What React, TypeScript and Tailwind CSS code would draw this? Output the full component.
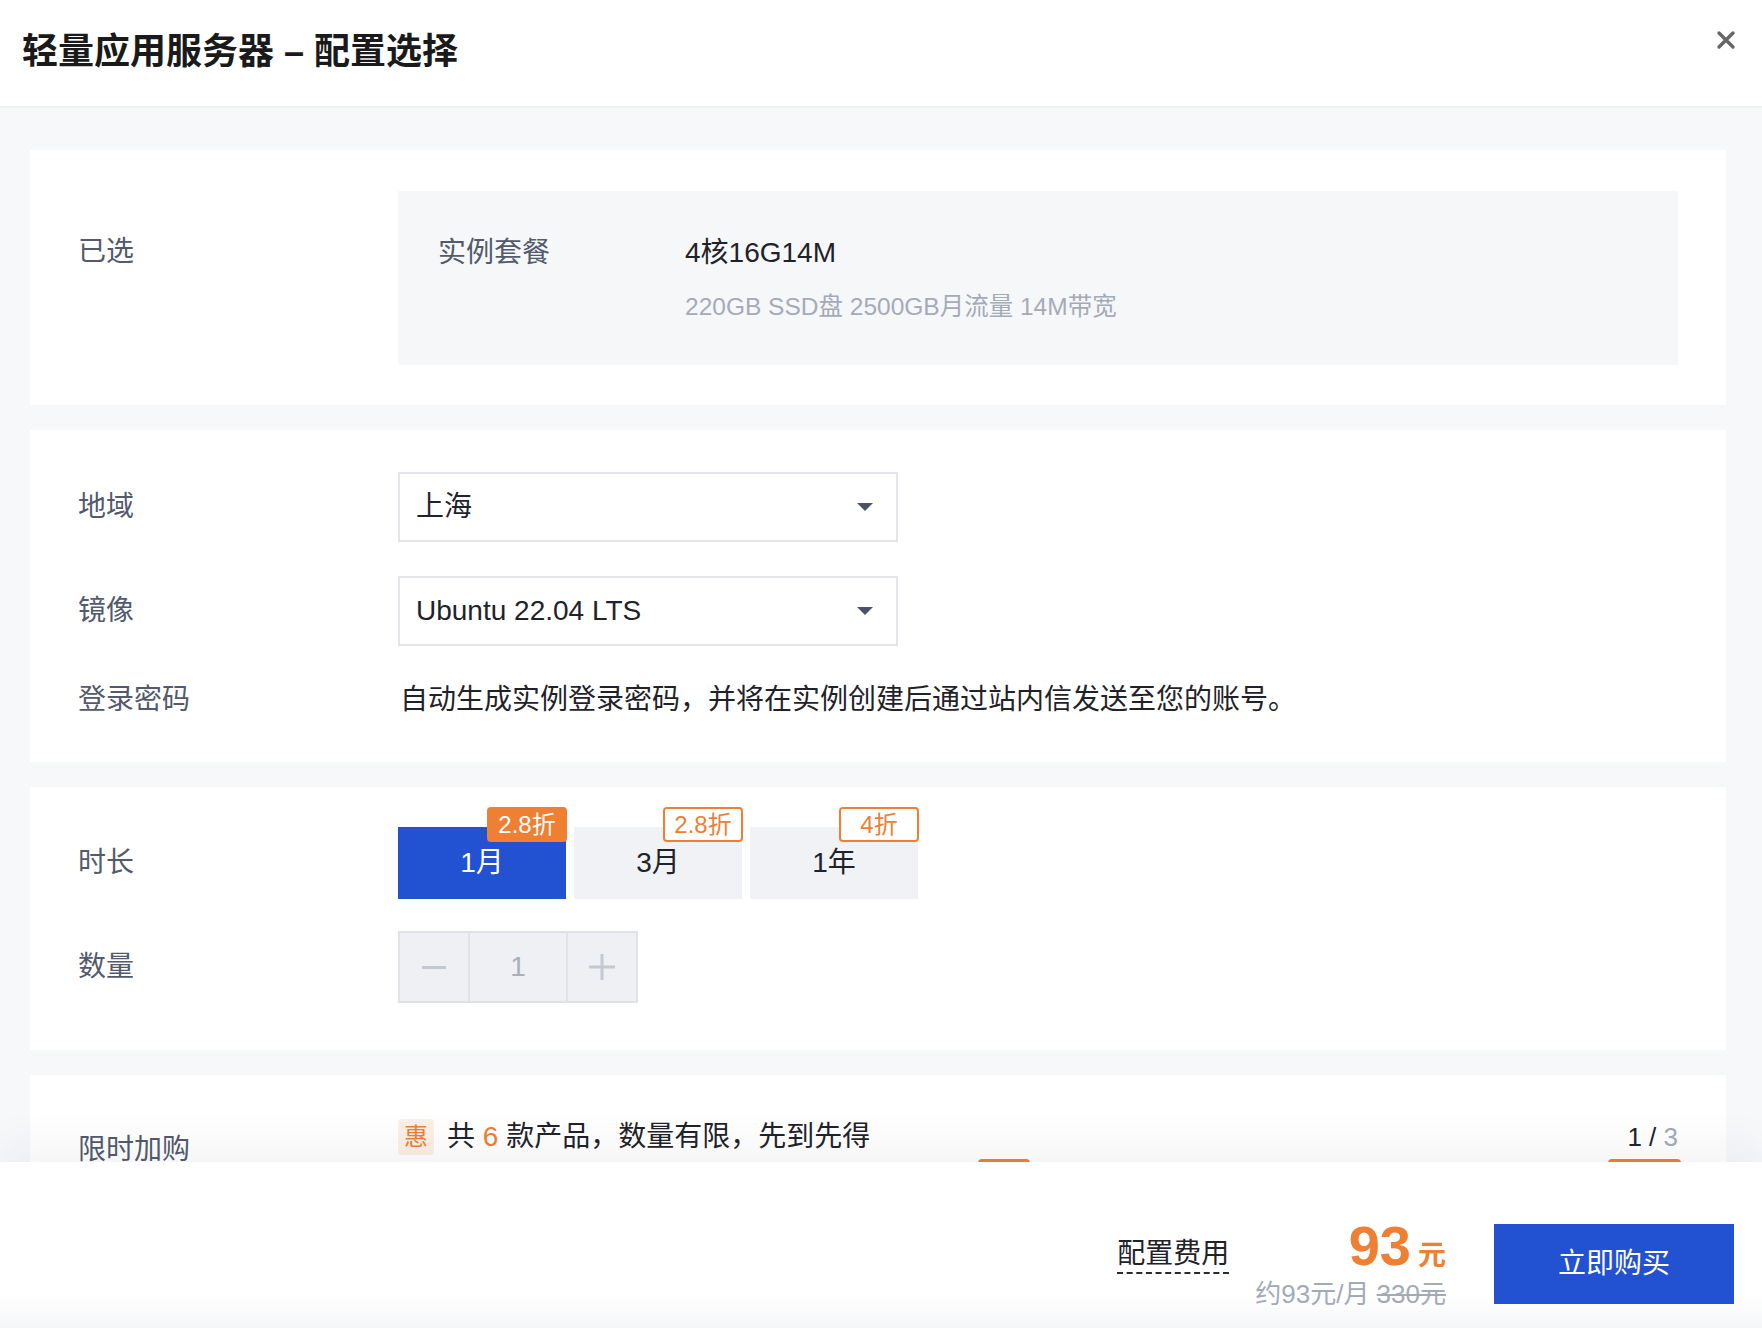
type RowProps = {
  label: string;
  children: React.ReactNode;
  labelClass?: string;
};

const Row = ({ label, children, labelClass = "" }: RowProps) => (
  <div className="flex items-center">
    <div className={`w-[320px] shrink-0 text-[28px] leading-[36px] text-[#525a6c] ${labelClass}`}>
      {label}
    </div>
    <div className="flex-1">{children}</div>
  </div>
);

const Caret = () => (
  <svg viewBox="0 0 16 8" className="h-[8px] w-[16px]" aria-hidden="true">
    <path d="M0 0h16L8 8z" fill="#4b5466" />
  </svg>
);

const Select = ({ value }: { value: string }) => (
  <div className="flex h-[70px] w-[500px] items-center justify-between border-2 border-[#e4e6eb] bg-white pl-[16px] pr-[23px]">
    <span className="text-[28px] leading-[36px] text-[#1f2329]">{value}</span>
    <Caret />
  </div>
);

const durations = [
  { label: "1月", badge: "2.8折", active: true },
  { label: "3月", badge: "2.8折", active: false },
  { label: "1年", badge: "4折", active: false },
];

export default function App() {
  return (
    <div className="flex h-screen flex-col overflow-hidden bg-white font-['Liberation_Sans','Noto_Sans_CJK_SC',sans-serif] text-[#1f2329]">
      {/* header */}
      <header className="flex h-[108px] shrink-0 items-start justify-between border-b-2 border-[#eff1f4] pl-[22px] pr-[26px] pt-[27px]">
        <h1 className="mt-[7px] text-[36px] font-bold leading-[36px] text-[#1a1a1a]">
          轻量应用服务器 – 配置选择
        </h1>
        <button type="button" className="mt-[3px] text-[#666]" aria-label="关闭">
          <svg viewBox="0 0 20 20" className="h-[20px] w-[20px]" aria-hidden="true">
            <path
              d="M3 3l14 14M17 3L3 17"
              stroke="currentColor"
              strokeWidth="3.4"
              strokeLinecap="round"
              fill="none"
            />
          </svg>
        </button>
      </header>

      {/* body */}
      <main className="flex-1 overflow-hidden bg-[#f7f8fa] pl-[30px] pr-[36px] pt-[42px]">
        <div className="flex flex-col gap-[25px]">
          {/* 已选 */}
          <section className="flex bg-white px-[48px] pb-[40px] pt-[41px]">
            <div className="mt-[43px] w-[320px] shrink-0 text-[28px] leading-[36px] text-[#525a6c]">
              已选
            </div>
            <div className="flex flex-1 bg-[#f6f7f9] pb-[42px] pl-[40px] pt-[44px]">
              <div className="w-[247px] shrink-0 text-[28px] leading-[36px] text-[#525a6c]">
                实例套餐
              </div>
              <div>
                <div className="text-[28px] leading-[36px] text-[#1f2329]">4核16G14M</div>
                <div className="mt-[20px] text-[24.5px] leading-[32px] text-[#a4abb8]">
                  220GB SSD盘 2500GB月流量 14M带宽
                </div>
              </div>
            </div>
          </section>

          {/* 地域 / 镜像 / 密码 */}
          <section className="flex flex-col gap-[34px] bg-white px-[48px] pb-[42px] pt-[42px]">
            <Row label="地域">
              <Select value="上海" />
            </Row>
            <Row label="镜像">
              <Select value="Ubuntu 22.04 LTS" />
            </Row>
            <Row label="登录密码">
              <div className="flex h-[40px] items-center pl-[2px] text-[28px] text-[#1f2329]">
                自动生成实例登录密码，并将在实例创建后通过站内信发送至您的账号。
              </div>
            </Row>
          </section>

          {/* 时长 / 数量 */}
          <section className="flex flex-col gap-[32px] bg-white px-[48px] pb-[47px] pt-[40px]">
            <Row label="时长">
              <div className="flex gap-[8px]">
                {durations.map((d) => (
                  <button
                    key={d.label}
                    type="button"
                    className={
                      d.active
                        ? "relative h-[72px] w-[168px] bg-[#2251d1] text-[28px] text-white"
                        : "relative h-[72px] w-[168px] bg-[#f0f2f5] text-[28px] text-[#1f2329]"
                    }
                  >
                    {d.label}
                    <span
                      className={
                        d.active
                          ? "absolute right-[-1px] top-[-20px] flex h-[35px] w-[80px] items-center justify-center rounded-[4px] bg-[#ee7f33] text-[24px] text-white"
                          : "absolute right-[-1px] top-[-20px] flex h-[35px] w-[80px] items-center justify-center rounded-[4px] border-2 border-[#ee7f33] bg-white text-[24px] text-[#ee7f33]"
                      }
                    >
                      {d.badge}
                    </span>
                  </button>
                ))}
              </div>
            </Row>
            <Row label="数量">
              <div className="flex h-[72px] w-[240px] border-2 border-[#dfe2e7] bg-[#eef0f4]">
                <div className="flex w-[70px] items-center justify-center border-r-2 border-[#dfe2e7]">
                  <span className="block h-[3px] w-[24px] bg-[#c3c9d2]" />
                </div>
                <div className="flex w-[98px] items-center justify-center border-r-2 border-[#dfe2e7] text-[28px] text-[#a8afbb]">
                  1
                </div>
                <div className="flex flex-1 items-center justify-center">
                  <svg viewBox="0 0 26 26" className="h-[26px] w-[26px]" aria-hidden="true">
                    <path d="M13 0v26M0 13h26" stroke="#c3c9d2" strokeWidth="3" fill="none" />
                  </svg>
                </div>
              </div>
            </Row>
          </section>

          {/* 限时加购 */}
          <section className="flex bg-white px-[48px] pt-[44px]">
            <div className="mt-[13px] w-[320px] shrink-0 text-[28px] leading-[36px] text-[#525a6c]">
              限时加购
            </div>
            <div className="flex-1">
              <div className="flex h-[36px] items-center justify-between">
                <div className="flex items-center">
                  <span className="flex h-[36px] w-[36px] items-center justify-center rounded-[4px] bg-[#fcefe5] text-[24px] text-[#ee7f33]">
                    惠
                  </span>
                  <span className="ml-[13px] text-[28px] text-[#1f2329]">
                    共 <span className="text-[#ee7f33]">6</span> 款产品，数量有限，先到先得
                  </span>
                </div>
                <div className="text-[26px] text-[#1f2329]">
                  1 / <span className="text-[#a4abb8]">3</span>
                </div>
              </div>
              <div className="mt-[4px] grid grid-cols-2 gap-[16px]">
                <div className="relative h-[240px] pt-[30px]">
                  <span className="absolute right-0 top-0 h-[30px] w-[52px] rounded-[4px] bg-[#ee7f33]" />
                  <div className="h-full border-2 border-[#e4e6eb]" />
                </div>
                <div className="relative h-[240px] pt-[30px]">
                  <span className="absolute right-[-3px] top-0 h-[30px] w-[73px] rounded-[4px] bg-[#ee7f33]" />
                  <div className="h-full border-2 border-[#e4e6eb]" />
                </div>
              </div>
            </div>
          </section>
        </div>
      </main>

      {/* footer */}
      <footer className="relative z-10 flex h-[166px] shrink-0 items-center justify-end bg-[linear-gradient(to_bottom,#ffffff_80%,#f5f6f8)] pr-[28px] pt-[38px] shadow-[0_-18px_40px_rgba(30,40,70,0.05)]">
        <div className="mb-[18px] border-b-2 border-dashed border-[#2a2a2a] text-[28px] leading-[36px] text-[#1f2329]">
          配置费用
        </div>
        <div className="ml-[26px] flex flex-col items-end">
          <div className="flex h-[60px] items-baseline text-[#ee7f33]">
            <span className="text-[56px] font-bold leading-[60px]">93</span>
            <span className="ml-[7px] text-[28px] font-semibold">元</span>
          </div>
          <div className="text-[26px] leading-[36px] text-[#a3aab7]">
            约93元/月 <span className="line-through">330元</span>
          </div>
        </div>
        <button
          type="button"
          className="ml-[48px] h-[80px] w-[240px] bg-[#2251d1] text-[28px] text-white"
        >
          立即购买
        </button>
      </footer>
    </div>
  );
}
